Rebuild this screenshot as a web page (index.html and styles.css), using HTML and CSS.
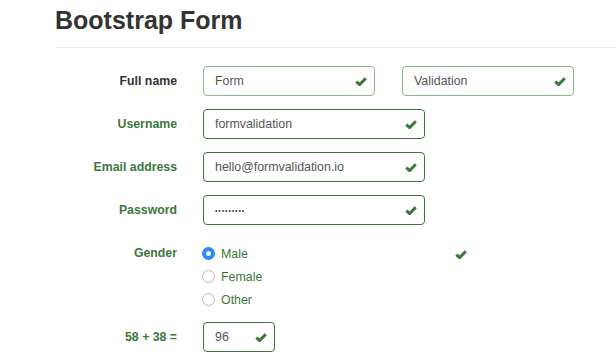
FILE: index.html
```html
<!DOCTYPE html>
<html lang="en">
<head>
    <meta charset="UTF-8">
    <title>Bootstrap Form</title>
    <link rel="stylesheet" href="styles.css">
</head>
<body>

    <div class="container">
        <h1 class="page-header">Bootstrap Form</h1>

        <form class="form">
            <div class="row">
                <label class="control-label plain">Full name</label>
                <div class="field field-half soft">
                    <input type="text" value="Form">
                    <svg class="ok" viewBox="0 0 12 9"><polyline points="1.3,4.6 4.6,7.6 10.8,1.3"/></svg>
                </div>
                <div class="field field-half soft">
                    <input type="text" value="Validation">
                    <svg class="ok" viewBox="0 0 12 9"><polyline points="1.3,4.6 4.6,7.6 10.8,1.3"/></svg>
                </div>
            </div>

            <div class="row">
                <label class="control-label">Username</label>
                <div class="field field-wide">
                    <input type="text" value="formvalidation">
                    <svg class="ok" viewBox="0 0 12 9"><polyline points="1.3,4.6 4.6,7.6 10.8,1.3"/></svg>
                </div>
            </div>

            <div class="row">
                <label class="control-label">Email address</label>
                <div class="field field-wide">
                    <input type="text" value="hello@formvalidation.io">
                    <svg class="ok" viewBox="0 0 12 9"><polyline points="1.3,4.6 4.6,7.6 10.8,1.3"/></svg>
                </div>
            </div>

            <div class="row">
                <label class="control-label">Password</label>
                <div class="field field-wide">
                    <input type="text" class="dots" value="•••••••••">
                    <svg class="ok" viewBox="0 0 12 9"><polyline points="1.3,4.6 4.6,7.6 10.8,1.3"/></svg>
                </div>
            </div>

            <div class="row">
                <label class="control-label">Gender</label>
                <div class="radio-group">
                    <div class="radio"><span class="radio-dot checked"></span>Male</div>
                    <div class="radio"><span class="radio-dot"></span>Female</div>
                    <div class="radio"><span class="radio-dot"></span>Other</div>
                    <svg class="ok" viewBox="0 0 12 9"><polyline points="1.3,4.6 4.6,7.6 10.8,1.3"/></svg>
                </div>
            </div>

            <div class="row">
                <label class="control-label">58 + 38 =</label>
                <div class="field field-small">
                    <input type="text" value="96">
                    <svg class="ok" viewBox="0 0 12 9"><polyline points="1.3,4.6 4.6,7.6 10.8,1.3"/></svg>
                </div>
            </div>
        </form>
    </div>

</body>
</html>
```

FILE: styles.css
```css
body {
    font-family: 'Liberation Sans', Arial, sans-serif;
    margin: 0;
    padding: 0;
    background: #fff;
    color: #333;
}

.container {
    padding-left: 55px;
}

.page-header {
    margin: 0;
    padding-top: 4px;
    height: 43px;
    font-size: 25px;
    line-height: 32px;
    font-weight: bold;
    color: #333;
    border-bottom: 1px solid #eee;
}

.form {
    padding-top: 18px;
}

.row {
    display: flex;
    align-items: flex-start;
    margin-bottom: 13px;
}

.control-label {
    width: 122px;
    margin-right: 26px;
    text-align: right;
    font-size: 12.3px;
    font-weight: bold;
    line-height: 30px;
    color: #3c763d;
}

.control-label.plain {
    color: #333;
}

.field {
    position: relative;
    height: 30px;
}

.field-half {
    width: 172px;
    margin-right: 27px;
}

.field-wide {
    width: 222px;
}

.field-small {
    width: 72px;
}

.field input {
    box-sizing: border-box;
    width: 100%;
    height: 30px;
    margin: 0;
    padding: 0 30px 0 11px;
    border: 1px solid #3c763d;
    border-radius: 4px;
    font-family: 'Liberation Sans', Arial, sans-serif;
    font-size: 12.4px;
    color: #555;
    background: #fff;
    outline: none;
}

.field.soft input {
    border-color: #8cb88c;
}

.field input.dots {
    font-size: 7px;
    letter-spacing: 0.9px;
    color: #444;
}

.ok {
    position: absolute;
    right: 8px;
    top: 11px;
    width: 12px;
    height: 9px;
}

.ok polyline {
    fill: none;
    stroke: #3c763d;
    stroke-width: 3;
}

.radio-group {
    position: relative;
    width: 270px;
    padding-top: 4px;
    margin-bottom: -2px;
}

.radio-group .ok {
    top: 12px;
    right: 6px;
}

.radio {
    display: flex;
    align-items: center;
    height: 23px;
    font-size: 12.4px;
    color: #3c763d;
}

.radio-dot {
    box-sizing: border-box;
    width: 13px;
    height: 13px;
    margin-left: -1px;
    margin-right: 6px;
    border: 1px solid #b9b9b9;
    border-radius: 50%;
    background: #fff;
}

.radio-dot.checked {
    border: 4.5px solid #2a8af6;
    background: #fff;
}
```
